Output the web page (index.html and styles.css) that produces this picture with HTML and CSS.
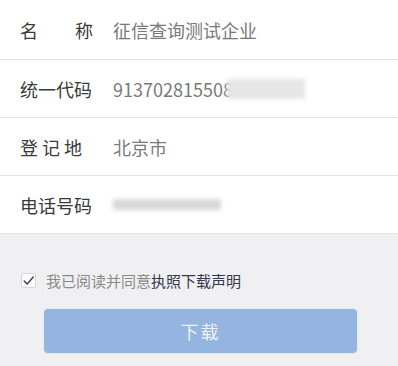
FILE: index.html
```html
<!DOCTYPE html>
<html lang="zh-CN">
<head>
    <meta charset="UTF-8">
    <title>执照下载</title>
    <link rel="stylesheet" href="styles.css">
</head>
<body>
    <div class="info-list">
        <div class="row first">
            <span class="label spread">名<i></i>称</span>
            <span class="value">征信查询测试企业</span>
        </div>
        <div class="row">
            <span class="label">统一代码</span>
            <span class="value">913702815508<span class="blur blur-code"></span></span>
        </div>
        <div class="row">
            <span class="label spread3">登 记 地</span>
            <span class="value">北京市</span>
        </div>
        <div class="row">
            <span class="label">电话号码</span>
            <span class="value"><span class="blur blur-phone"></span></span>
        </div>
    </div>
    <div class="bottom">
        <label class="agree">
            <span class="check">
                <svg width="15" height="15" viewBox="0 0 15 15"><path d="M2.5 8 L6 11.5 L13 3.5" fill="none" stroke="#3b3f5c" stroke-width="1.6" stroke-linecap="round" stroke-linejoin="round"/></svg>
            </span>
            <span class="agree-text">我已阅读并同意<b>执照下载声明</b></span>
        </label>
        <button class="download">下载</button>
    </div>
</body>
</html>
```
FILE: styles.css
```css
body{
    margin: 0;
    width: 398px;
    height: 366px;
    background-color: #f0f0f2;
    font-family: "Noto Sans CJK SC", "Noto Sans", sans-serif;
    overflow: hidden;
}

.info-list{
    background-color: #fff;
}

.row{
    height: 57px;
    border-bottom: 1px solid #e4e4e6;
    display: flex;
    align-items: center;
    padding-left: 20px;
}

.row.first{
    height: 59px;
}

.label{
    width: 73px;
    font-size: 18px;
    color: #3a3a3a;
    margin-right: 20px;
    white-space: nowrap;
}

.spread{
    display: flex;
    justify-content: space-between;
}

.spread i{
    flex: 1;
}

.spread3{
    display: flex;
    justify-content: space-between;
}

.value{
    font-size: 18px;
    color: #7a7a7a;
    display: flex;
    align-items: center;
    white-space: nowrap;
}

.blur{
    display: inline-block;
    background-color: #e6e6e6;
    filter: blur(2px);
}

.blur-code{
    width: 78px;
    height: 20px;
    margin-left: -6px;
}

.blur-phone{
    width: 108px;
    height: 11px;
    background-color: #d8d8d8;
}

.bottom{
    padding-top: 34px;
}

.agree{
    display: flex;
    align-items: center;
    padding-left: 21px;
    height: 24px;
}

.check{
    width: 13px;
    height: 13px;
    border: 1px solid #d6d6dc;
    border-radius: 2px;
    background-color: #fbfbfc;
    display: flex;
    align-items: center;
    justify-content: center;
    margin-right: 10px;
    overflow: visible;
}

.agree-text{
    font-size: 15px;
    color: #8a8a8a;
}

.agree-text b{
    font-weight: normal;
    color: #35384f;
}

.download{
    display: block;
    margin: 16px 0 0 43px;
    width: 315px;
    height: 46px;
    border: 1px solid #e2ebf6;
    border-radius: 5px;
    background-color: #93b5df;
    color: #eef3fa;
    font-size: 18px;
    font-family: inherit;
    letter-spacing: 2px;
}
```
